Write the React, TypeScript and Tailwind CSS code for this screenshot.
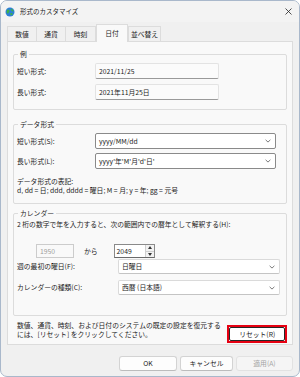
import type { ReactNode } from 'react'

function Chevron() {
  return (
    <svg width="6" height="4" viewBox="0 0 6 4" className="shrink-0">
      <path d="M0.6 0.8 L3 3.1 L5.4 0.8" fill="none" stroke="#5a5a5a" strokeWidth="0.8" />
    </svg>
  )
}

function Group({ title, className, children }: { title: string; className?: string; children: ReactNode }) {
  return (
    <fieldset className={`border border-[#dcdcdc] rounded-[2px] px-[3px] ${className ?? ''}`}>
      <legend className="ml-[1px] px-[2px] leading-[9px]">{title}</legend>
      {children}
    </fieldset>
  )
}

function Combo({ value, editable, className }: { value: string; editable?: boolean; className?: string }) {
  return (
    <div
      className={`flex items-center justify-between pl-[3px] pr-[4px] bg-white rounded-[2px] ${
        editable ? 'border border-[#8a8a8a]' : 'border border-[#dadada] border-b-[#c4c4c4]'
      } ${className ?? ''}`}
    >
      <span className="whitespace-nowrap">{value}</span>
      <Chevron />
    </div>
  )
}

const tabs = ['数値', '通貨', '時刻', '日付', '並べ替え']
const tabWidths = ['w-[30px]', 'w-[30px]', 'w-[31px]', 'w-[32px]', 'w-[33px]']

export default function App() {
  return (
    <div className="w-[300px] h-[377px] flex flex-col bg-[#f0f0f0] border border-[#a9b8cb] rounded-[7px] overflow-hidden text-[6.8px] leading-[9px] text-[#1b1b1b] font-['Noto_Sans_CJK_JP',sans-serif]">
      {/* title bar */}
      <div className="h-[21px] shrink-0 flex items-center pl-[4px] pr-[6px] bg-[#f3f3f3]">
        <svg width="10" height="10" viewBox="0 0 10 10" className="shrink-0">
          <circle cx="5" cy="5" r="4.5" fill="#2d7fd6" />
          <path d="M2 3 C3 2 4 2.5 4.5 3.5 C5 4.5 3.8 5 3.5 6 C3 7 2 6.5 1.6 5.5 Z" fill="#3db24b" />
          <path d="M6 1.5 C7.5 2 8.5 3 8.5 4.5 C7.5 4.5 6.5 4 6 3 Z" fill="#3db24b" />
          <path d="M5.5 6 C6.5 5.8 7.5 6.3 7.8 7.2 C7 8.3 6 8.5 5.4 8.2 Z" fill="#3db24b" />
        </svg>
        <span className="ml-[5px] text-[6.5px] leading-[9px]">形式のカスタマイズ</span>
        <svg width="7" height="7" viewBox="0 0 7 7" className="ml-auto mr-[1px]">
          <path d="M0.5 0.5 L6.5 6.5 M6.5 0.5 L0.5 6.5" stroke="#222" strokeWidth="0.8" />
        </svg>
      </div>

      <div className="flex flex-col px-[6px]">
        {/* tabs */}
        <div className="flex items-end h-[19px] pt-[2px]">
          {tabs.map((t, i) =>
            t === '日付' ? (
              <div
                key={t}
                className={`${tabWidths[i]} h-[18px] -mb-px relative z-10 flex items-center justify-center bg-[#f9f9f9] border border-b-0 border-[#dcdcdc] pb-[1px]`}
              >
                {t}
              </div>
            ) : (
              <div
                key={t}
                className={`${tabWidths[i]} h-[15px] flex items-center justify-center border border-b-0 border-[#dcdcdc] -mr-px ${i === 2 ? 'mr-0' : ''}`}
              >
                {t}
              </div>
            )
          )}
        </div>

        {/* panel */}
        <div className="h-[304px] flex flex-col bg-[#f9f9f9] border border-[#dcdcdc] px-[5px] pt-[8px]">
          <Group title="例" className="pb-[9px]">
            <div className="flex flex-col gap-[5px] pt-[4px]">
              {[
                ['短い形式:', '2021/11/25'],
                ['長い形式:', '2021年11月25日'],
              ].map(([l, v]) => (
                <div key={l} className="flex items-center">
                  <span className="w-[78px] shrink-0">{l}</span>
                  <div className="w-[124px] h-[16px] flex items-center pl-[3px] bg-[#fbfbfb] border border-[#e3e3e3] border-b-[#9a9a9a] rounded-[2px]">
                    {v}
                  </div>
                </div>
              ))}
            </div>
          </Group>

          <Group title="データ形式" className="mt-[10px] pb-[8px]">
            <div className="flex flex-col gap-[4px] pt-[4px]">
              <div className="flex items-center">
                <span className="w-[78px] shrink-0">短い形式(S):</span>
                <Combo value="yyyy/MM/dd" editable className="w-[181px] h-[16px]" />
              </div>
              <div className="flex items-center">
                <span className="w-[78px] shrink-0">長い形式(L):</span>
                <Combo value="yyyy'年'M'月'd'日'" editable className="w-[181px] h-[16px]" />
              </div>
            </div>
            <div className="mt-[7.5px]">データ形式の表記:</div>
            <div>d, dd = 日; ddd, dddd = 曜日; M = 月; y = 年; gg = 元号</div>
          </Group>

          <Group title="カレンダー" className="mt-[5.5px] pb-[20px]">
            <div className="mt-[2px]">2 桁の数字で年を入力すると、次の範囲内での暦年として解釈する(H):</div>
            <div className="flex items-center mt-[15px] pl-[19px] h-[14px]">
              <div className="w-[38px] h-[14px] flex items-center pl-[3px] border border-[#cccccc] text-[#9d9d9d] bg-[#f9f9f9]">
                1950
              </div>
              <span className="ml-[10px]">から</span>
              <div className="ml-[16px] w-[41px] h-[14px] flex items-center bg-white border border-[#8a8a8a] border-b-[#6a6a6a]">
                <span className="pl-[2px] flex-1">2049</span>
                <div className="w-[9px] h-full flex flex-col border-l border-[#cfcfcf]">
                  <div className="flex-1 flex items-center justify-center bg-[#f2f2f2] border-b border-[#cfcfcf]">
                    <svg width="4" height="3" viewBox="0 0 4 3">
                      <path d="M0 3 L2 0 L4 3 Z" fill="#333" />
                    </svg>
                  </div>
                  <div className="flex-1 flex items-center justify-center bg-[#f2f2f2]">
                    <svg width="4" height="3" viewBox="0 0 4 3">
                      <path d="M0 0 L4 0 L2 3 Z" fill="#333" />
                    </svg>
                  </div>
                </div>
              </div>
            </div>
            <div className="flex items-center mt-[1px]">
              <span className="w-[101px] shrink-0">週の最初の曜日(F):</span>
              <Combo value="日曜日" className="w-[162px] h-[15px]" />
            </div>
            <div className="flex items-center mt-[6px]">
              <span className="w-[101px] shrink-0">カレンダーの種類(C):</span>
              <Combo value="西暦 (日本語)" className="w-[162px] h-[15px]" />
            </div>
          </Group>

          <div className="flex items-start mt-[4.5px] pl-[4px]">
            <div className="w-[212px] leading-[9.5px] whitespace-nowrap">
              数値、通貨、時刻、および日付のシステムの既定の設定を復元する
              <br />
              には、[リセット] をクリックしてください。
            </div>
            <div className="mt-[4.5px] w-[60px] h-[18px] border-2 border-[#e60012]">
              <div className="h-full flex items-center justify-center bg-white border border-[#262626] rounded-[2px]">
                リセット(R)
              </div>
            </div>
          </div>
        </div>

        {/* dialog buttons */}
        <div className="flex justify-end gap-[3px] mt-[11px]">
          <div className="w-[58px] h-[15px] flex items-center justify-center bg-[#fdfdfd] border border-[#d3d3d3] border-b-[#bcbcbc] rounded-[3px]">
            OK
          </div>
          <div className="w-[53px] h-[15px] flex items-center justify-center bg-[#fdfdfd] border border-[#d3d3d3] border-b-[#bcbcbc] rounded-[3px]">
            キャンセル
          </div>
          <div className="w-[57px] h-[15px] flex items-center justify-center bg-[#f5f5f5] border border-[#e2e2e2] rounded-[3px] text-[#a3a3a3]">
            適用(A)
          </div>
        </div>
      </div>
    </div>
  )
}
